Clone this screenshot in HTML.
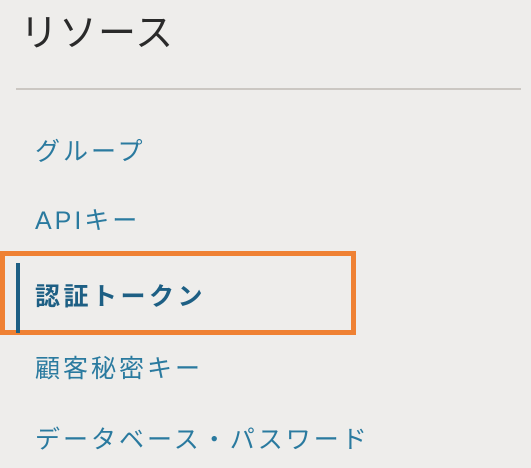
<!DOCTYPE html>
<html><head><meta charset="utf-8"><style>
html,body{margin:0;padding:0;width:531px;height:468px;overflow:hidden;background:#eeedeb;font-family:"Liberation Sans","Noto Sans CJK JP",sans-serif;}
.t{position:absolute;left:20px;top:9px;font-size:38px;color:#2a2a2a;line-height:50px;letter-spacing:1px;}
.hr{position:absolute;left:16px;right:10px;top:88px;height:2px;background:#cbc7c2;}
.i{position:absolute;left:35px;font-size:25px;color:#2a7a9f;line-height:30px;letter-spacing:3px;}
.box{position:absolute;left:0;top:251px;width:346px;height:74px;border:5px solid #ef8133;}
.bar{position:absolute;left:16px;top:263px;width:4px;height:70px;background:#1d5f84;}
</style></head><body>
<div class="t">リソース</div>
<div class="hr"></div>
<div class="i" style="top:137px">グループ</div>
<div class="i" style="top:206px">APIキー</div>
<div class="box"></div>
<div class="bar"></div>
<div class="i" style="top:282px;font-weight:bold;color:#1d5f84;letter-spacing:3.5px">認証トークン</div>
<div class="i" style="top:354px">顧客秘密キー</div>
<div class="i" style="top:425px">データベース・パスワード</div>
</body></html>
